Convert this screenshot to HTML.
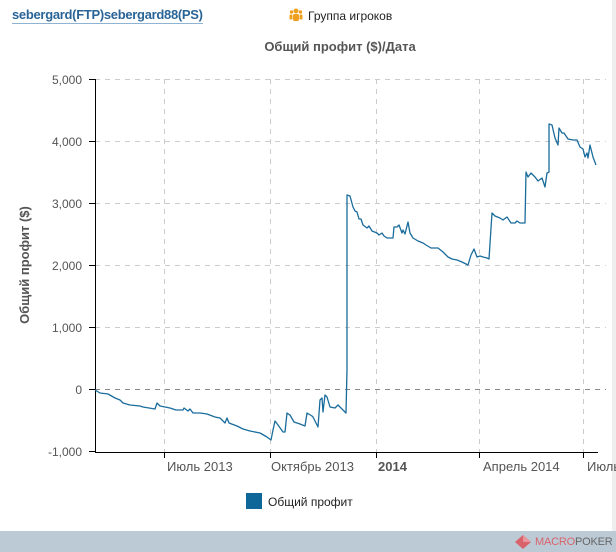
<!DOCTYPE html>
<html><head><meta charset="utf-8"><style>
body{margin:0;width:616px;height:552px;overflow:hidden;background:#fff;font-family:"Liberation Sans","DejaVu Sans",sans-serif;position:relative}
.hd{position:absolute;left:12px;top:7px;font-size:13px;letter-spacing:-0.3px;font-weight:bold;color:#2a6496;border-bottom:1px solid #8fb3d3;line-height:16px}
.grp{position:absolute;left:308px;top:9px;font-size:12px;color:#222}
.bar{position:absolute;left:0;top:531px;width:616px;height:21px;background:#bccad6}
.rb{position:absolute;left:612px;top:0;width:4px;height:531px;background:#eee}
</style></head><body>
<div class="hd">sebergard(FTP)sebergard88(PS)</div>
<svg style="position:absolute;left:289px;top:8px" width="14" height="14" viewBox="0 0 14 14"><circle cx="7" cy="3" r="2.5" fill="#f0a020"/><rect x="4" y="6" width="6" height="7" rx="1.5" fill="#f0a020"/><circle cx="2.5" cy="4" r="1.7" fill="#f0a020"/><circle cx="11.5" cy="4" r="1.7" fill="#f0a020"/><rect x="0.5" y="6.5" width="3" height="5" rx="1" fill="#f0a020"/><rect x="10.5" y="6.5" width="3" height="5" rx="1" fill="#f0a020"/></svg>
<div class="grp">Группа игроков</div>
<div class="rb"></div>
<svg style="position:absolute;left:0;top:0" width="616" height="531" font-family="Liberation Sans, DejaVu Sans, sans-serif">
<text x="340" y="51" text-anchor="middle" font-size="13" font-weight="bold" fill="#555">Общий профит ($)/Дата</text>
<g stroke="#ccc" stroke-dasharray="5,5" stroke-width="1">
<line x1="95" y1="79.5" x2="606" y2="79.5"/><line x1="95" y1="141.5" x2="606" y2="141.5"/><line x1="95" y1="203.5" x2="606" y2="203.5"/><line x1="95" y1="265.5" x2="606" y2="265.5"/><line x1="95" y1="327.5" x2="606" y2="327.5"/>
<line x1="164.5" y1="79" x2="164.5" y2="452"/><line x1="270.5" y1="79" x2="270.5" y2="452"/><line x1="376.5" y1="79" x2="376.5" y2="452"/><line x1="479.5" y1="79" x2="479.5" y2="452"/><line x1="583.5" y1="79" x2="583.5" y2="452"/>
</g>
<line x1="95" y1="389.5" x2="606" y2="389.5" stroke="#888" stroke-dasharray="5,5"/>
<g stroke="#000" stroke-width="1">
<line x1="95.5" y1="79" x2="95.5" y2="452"/><line x1="95" y1="452.5" x2="598" y2="452.5"/>
<line x1="89" y1="79.5" x2="95" y2="79.5"/><line x1="89" y1="141.5" x2="95" y2="141.5"/><line x1="89" y1="203.5" x2="95" y2="203.5"/><line x1="89" y1="265.5" x2="95" y2="265.5"/><line x1="89" y1="327.5" x2="95" y2="327.5"/><line x1="89" y1="389.5" x2="95" y2="389.5"/><line x1="89" y1="451.5" x2="95" y2="451.5"/>
<line x1="164.5" y1="452" x2="164.5" y2="458"/><line x1="270.5" y1="452" x2="270.5" y2="458"/><line x1="376.5" y1="452" x2="376.5" y2="458"/><line x1="479.5" y1="452" x2="479.5" y2="458"/><line x1="583.5" y1="452" x2="583.5" y2="458"/>
</g>
<g font-size="12" fill="#555" text-anchor="end">
<text x="82" y="84">5,000</text><text x="82" y="146">4,000</text><text x="82" y="208">3,000</text><text x="82" y="270">2,000</text><text x="82" y="332">1,000</text><text x="82" y="394">0</text><text x="82" y="456">-1,000</text>
</g>
<g font-size="13" fill="#555">
<text x="167" y="471">Июль 2013</text><text x="271" y="471">Октябрь 2013</text><text x="378" y="471" font-weight="bold">2014</text><text x="483" y="471">Апрель 2014</text><text x="587" y="471">Июль</text>
</g>
<text transform="translate(29,265) rotate(-90)" text-anchor="middle" font-size="13" font-weight="bold" fill="#555">Общий профит ($)</text>
<polyline fill="none" stroke="#1a6c9c" stroke-width="1.3" stroke-linejoin="round" points="95,390 100,393 108,394 115,398 120,400 123,403 130,405 140,406 143,407 155,409 157,403 160,406 170,408 176,410 183,410 184,408 188,411 190,409 193,413 200,413 207,414 215,417 220,418 225,423 227,418 229,423 237,426 243,429 250,431 260,433 267,437 271,440 273,430 275,421 278,425 283,432 285,432 287,413 290,415 294,422 300,424 305,426 307,413 312,416 313,417 318,427 320,400 322,398 323,412 325,395 327,397 330,407 335,408 338,405 343,410 346,413 347,370 347,195 350,196 353,207 355,211 357,212 359,219 361,219 363,225 367,228 369,226 372,231 377,233 379,235 382,233 384,236 387,238 393,238 394,227 397,227 399,225 402,233 403,230 405,234 408,222 410,233 413,238 418,241 423,243 426,245 431,248 438,248 443,252 448,257 452,259 457,260 462,262 468,265 471,255 474,249 477,257 480,256 483,257 487,258 489,259 492,213 495,216 500,218 503,220 507,217 511,223 515,223 517,221 520,223 525,223 526,172 528,177 531,173 535,177 538,181 542,178 545,187 547,173 549,172 549,124 552,125 555,138 558,145 559,128 562,133 564,133 568,139 573,140 577,140 580,147 583,149 585,157 587,153 588,158 590,145 593,157 596,165"/>
<rect x="246" y="493" width="16" height="16" fill="#0f6699"/>
<text x="268" y="506" font-size="12" fill="#222">Общий профит</text>
</svg>
<div class="bar"></div>
<svg style="position:absolute;left:513px;top:533px" width="20" height="18" viewBox="0 0 20 18"><polygon points="2,9 10,2 18,9 10,16" fill="#d9636b"/><polygon points="10,2 18,9 10,9" fill="#e8969b"/></svg>
<div style="position:absolute;left:535px;top:536px;font-size:11px;color:#d9636b;letter-spacing:-0.2px">MACRO<span style="color:#666">POKER</span></div>
</body></html>
